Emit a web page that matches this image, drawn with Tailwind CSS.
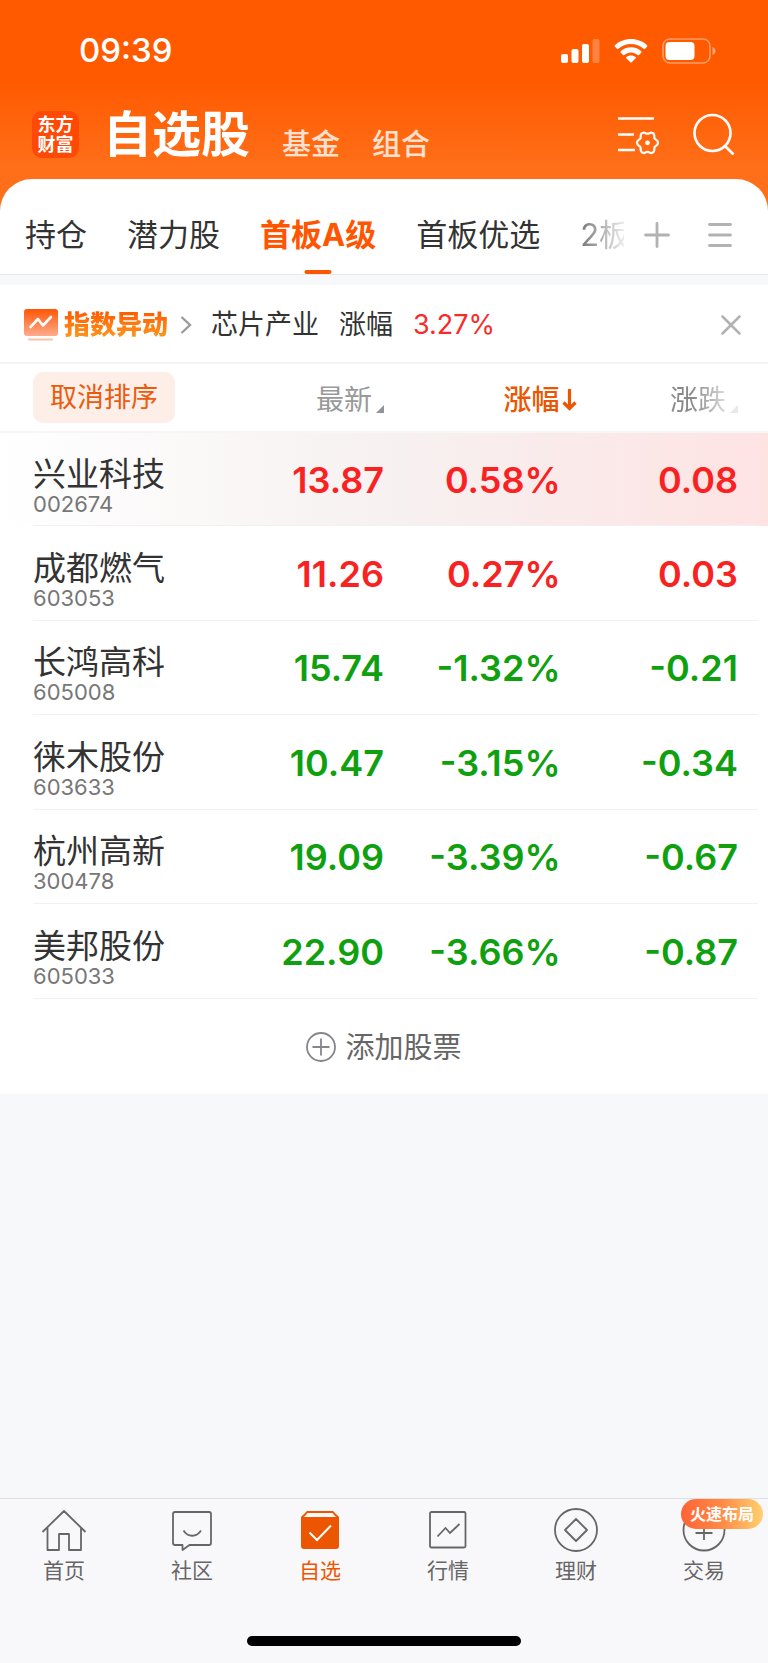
<!DOCTYPE html>
<html lang="zh-CN">
<head>
    <meta charset="UTF-8">
    <meta name="viewport" content="width=device-width, initial-scale=1.0">
    <title>自选股</title>
    <script src="https://cdn.jsdelivr.net/npm/@tailwindcss/browser@4"></script>
</head>
<body class="min-h-screen flex flex-col bg-[#f7f8fa] text-[#333] font-['Inter','Noto_Sans_CJK_SC',sans-serif]">
    <div class="bg-[linear-gradient(#ff5a00_80px,#ff6e18_165px)]">
        <!-- Status bar -->
        <div class="h-[102px] pl-[79px] pr-[52px] flex items-center justify-between text-white">
            <span class="text-[33px] font-medium">09:39</span>
            <div class="flex items-center gap-[14px]">
                <svg class="w-[39px] h-[26px]" viewBox="0 0 39 26" fill="currentColor">
                    <rect x="0" y="16" width="7" height="9" rx="2"/>
                    <rect x="10.500" y="11" width="7" height="14" rx="2"/>
                    <rect x="21" y="6" width="7" height="19" rx="2"/>
                    <rect x="31.500" y="1" width="7" height="24" rx="2" opacity=".25"/>
                </svg>
                <svg class="w-[34px] h-[26px]" viewBox="0 0 34 26" fill="currentColor">
                    <path d="M17 1C10.700 1 5 3.300 1 7.200c-.5.500-.5 1 0 1.500l2 2c.4.400.9.400 1.400 0C7.800 7.700 12.200 6 17 6s9.200 1.700 12.600 4.700c.5.400 1 .4 1.400 0l2-2c.5-.5.5-1 0-1.500C29 3.300 23.300 1 17 1z"/>
                    <path d="M17 9.300c-4 0-7.600 1.500-10.200 4-.5.400-.5 1 0 1.400l2.200 2.200c.4.400.9.400 1.400 0 1.800-1.500 4.100-2.500 6.600-2.500s4.800 1 6.600 2.500c.5.400 1 .4 1.400 0l2.200-2.200c.5-.4.500-1 0-1.400-2.600-2.500-6.200-4-10.200-4z"/>
                    <path d="M17 17.500c-1.900 0-3.500.6-4.700 1.600-.4.400-.4.800 0 1.200l4 4c.5.500.9.500 1.400 0l4-4c.4-.4.400-.8 0-1.200-1.200-1-2.800-1.600-4.700-1.600z"/>
                </svg>
                <svg class="w-[54px] h-[26px]" viewBox="0 0 54 26">
                    <rect x="1" y="1" width="47" height="24" rx="7" fill="none" stroke="#fff" stroke-opacity=".4" stroke-width="1.600"/>
                    <rect x="3.500" y="4" width="29" height="18" rx="4" fill="#fff"/>
                    <path d="M50.500 9c4 1.500 4 6.500 0 8z" fill="#fff" fill-opacity=".45"/>
                </svg>
            </div>
        </div>

        <!-- Title bar -->
        <header class="h-[64px] mb-[13px] pl-8 pr-[33px] flex items-center justify-between text-white">
            <div class="flex items-center">
                <div class="w-[47px] h-[47px] mr-6 pt-[2px] rounded-[10px] bg-[#ff4906] flex items-center justify-center text-center text-[18px] leading-5 font-bold">东方<br>财富</div>
                <div class="pt-[2px] flex items-end gap-8">
                    <h1 class="text-[49px] leading-[62px] font-bold">自选股</h1>
                    <a href="#" class="text-[29px] leading-[42px] font-medium text-white/80">基金</a>
                    <a href="#" class="text-[29px] leading-[42px] font-medium text-white/80">组合</a>
                </div>
            </div>
            <div class="flex items-center gap-[33px]">
                <button aria-label="设置">
                    <svg class="block w-[43px] h-[42px]" viewBox="0 0 43 42" fill="none" stroke="currentColor" stroke-width="2.600">
                        <path d="M1 5.500h36M1 21.500h16M1 37h17"/>
                        <path stroke-width="2.200" stroke-linejoin="round" d="M27 19.500c1 0 1.500 1.200 3.500 1.200s2.500-1.200 3.500-1.200c1.500.2 3 1.200 3.200 2.500.3 1.200-.2 2 .4 3.500.9 1.400 3.400 1.500 3.400 4.300s-2.500 2.900-3.400 4.300c-.6 1.500-.1 2.300-.4 3.500-.2 1.300-1.700 2.300-3.200 2.500-1 0-1.500-1.200-3.500-1.200s-2.500 1.200-3.500 1.200c-1.500-.2-3-1.200-3.200-2.500-.3-1.200.2-2-.4-3.500-.9-1.400-3.400-1.500-3.400-4.300s2.500-2.900 3.400-4.300c.6-1.500.1-2.300.4-3.500.2-1.300 1.700-2.300 3.200-2.500z"/>
                        <circle cx="30.500" cy="29.800" r="2.400" fill="currentColor" stroke="none"/>
                    </svg>
                </button>
                <button aria-label="搜索">
                    <svg class="block w-[42px] h-[42px]" viewBox="0 0 42 42" fill="none" stroke="currentColor" stroke-width="2.600">
                        <circle cx="19.500" cy="20" r="18"/>
                        <path d="M32 33l8.500 8.500"/>
                    </svg>
                </button>
            </div>
        </header>

        <!-- Group tabs -->
        <nav class="h-[96px] pl-[25px] pr-9 rounded-t-[32px] bg-white border-b border-[#e8e9eb] flex items-center justify-between text-[31px]">
            <div class="h-full pt-[18px] flex items-center gap-10 whitespace-nowrap overflow-hidden">
                <a href="#">持仓</a>
                <a href="#">潜力股</a>
                <a href="#" class="relative h-full flex items-center font-bold text-[#ff5500] after:absolute after:bottom-0 after:left-1/2 after:-translate-x-1/2 after:w-[27px] after:h-1 after:rounded-sm after:bg-[#ff5500]">首板A级</a>
                <a href="#">首板优选</a>
                <a href="#" class="w-11 overflow-hidden bg-linear-to-r from-[#777] to-[#eee] bg-clip-text text-transparent">2板</a>
            </div>
            <div class="pt-4 flex items-center gap-[38px] text-[#b2b2b2]">
                <button aria-label="添加分组">
                    <svg class="block w-[26px] h-[26px]" viewBox="0 0 26 26" stroke="currentColor" stroke-width="2.800" stroke-linecap="round"><path d="M13 1.500v23M1.500 13h23"/></svg>
                </button>
                <button aria-label="管理分组">
                    <svg class="block w-6 h-[26px]" viewBox="0 0 24 26" stroke="currentColor" stroke-width="2.800" stroke-linecap="round"><path d="M1.500 2.500h21M1.500 13h21M1.500 23.500h21"/></svg>
                </button>
            </div>
        </nav>
    </div>

    <main class="mt-[10px] bg-white">
        <!-- Index alert -->
        <div class="h-[79px] pt-[2px] pl-6 pr-[27px] border-b-2 border-[#f4f4f5] flex items-center text-[27px]">
            <svg class="w-[34px] h-8 mr-[6px]" viewBox="0 0 34 32">
                <defs>
                    <linearGradient id="chart" x1="0" y1="0" x2="0" y2="1">
                        <stop offset="0" stop-color="#ff5606"/>
                        <stop offset="1" stop-color="#ffac8c"/>
                    </linearGradient>
                </defs>
                <rect width="34" height="27" rx="3" fill="url(#chart)"/>
                <path d="M6.500 18L14 10l5 6.500L27 8" fill="none" stroke="#fff" stroke-width="2.600" stroke-linecap="round" stroke-linejoin="round"/>
                <rect x="4" y="29.500" width="25" height="2" rx="1" fill="#ffbfa6"/>
            </svg>
            <span class="text-[26px] leading-8 font-black bg-linear-to-b from-[#ff5200] to-[#ff9d1c] bg-clip-text text-transparent">指数异动</span>
            <svg class="w-3 h-5 ml-3 mr-[19px]" viewBox="0 0 12 20" fill="none" stroke="#999" stroke-width="2.300"><path d="M1.500 2l8.500 8-8.500 8"/></svg>
            <span class="pt-[2px]">芯片产业</span>
            <span class="ml-5 pt-[2px]">涨幅</span>
            <span class="ml-5 pt-[2px] text-[#f92a2a]">3.27%</span>
            <button class="ml-auto" aria-label="关闭">
                <svg class="block w-5 h-5" viewBox="0 0 20 20" stroke="#b2b2b2" stroke-width="2.500" stroke-linecap="round"><path d="M1.500 1.500l17 17M18.500 1.500l-17 17"/></svg>
            </button>
        </div>

        <!-- Stock table -->
        <table class="w-full table-fixed text-right">
            <thead>
                <tr class="h-[68px] border-b-2 border-[#f6f6f7] text-[28px] text-[#999]">
                    <th class="w-[28%] pl-[33px] text-left font-normal">
                        <button class="h-[51px] w-[142px] pt-[2px] rounded-[10px] bg-[#fdeee8] text-[27px] text-[#ec5a0c] whitespace-nowrap">取消排序</button>
                    </th>
                    <th class="w-[22%] pt-1 font-normal">
                        <button class="inline-flex items-end gap-1">最新<svg class="w-2 h-2 mb-2" viewBox="0 0 8 8" fill="#909399"><path d="M8 0v8H0z"/></svg></button>
                    </th>
                    <th class="w-[23%] pt-1 font-normal">
                        <button class="-mr-4 inline-flex items-center gap-[2px] font-medium text-[#ec5600]">涨幅<svg class="w-[15px] h-[22px]" viewBox="0 0 15 22" fill="none" stroke="currentColor" stroke-width="3.200"><path d="M7.500 0v20M1.500 13.500l6 6 6-6"/></svg></button>
                    </th>
                    <th class="w-[27%] pt-1 pr-[30px] font-normal">
                        <button class="inline-flex items-end gap-1"><span class="bg-linear-to-r from-[#888] from-40% to-[#ddd] bg-clip-text text-transparent">涨跌</span><svg class="w-2 h-2 mb-2" viewBox="0 0 8 8" fill="#e8e8ea"><path d="M8 0v8H0z"/></svg></button>
                    </th>
                </tr>
            </thead>
            <tbody id="stockList">
                <!-- Rows are inserted by displayStocks -->
            </tbody>
        </table>

        <button class="w-full h-[95px] flex items-center justify-center gap-[9px] text-[29px] text-[#666]">
            <svg class="w-[30px] h-[30px]" viewBox="0 0 30 30" fill="none" stroke="#85858c" stroke-width="1.800"><circle cx="15" cy="15" r="14"/><path d="M15 6.500v17M6.500 15h17"/></svg>
            <span class="pt-[2px]">添加股票</span>
        </button>
    </main>

    <!-- Bottom navigation -->
    <footer class="mt-auto h-[165px] border-t border-[#dddfe3] bg-[#f8f8fb] flex flex-col">
        <nav class="grid grid-cols-6 pt-2 text-[21px] leading-9 text-[#666]">
            <a href="#" class="flex flex-col items-center">
                <svg class="w-[46px] h-[46px]" viewBox="0 0 46 46" fill="none" stroke="currentColor" stroke-width="1.800"><path d="M1.500 25L23 4l21.500 21M6.500 20.500V43h11.500V27h10v16h12V20.500" stroke-linejoin="round"/></svg>
                首页
            </a>
            <a href="#" class="flex flex-col items-center">
                <svg class="w-[46px] h-[46px]" viewBox="0 0 46 46" fill="none" stroke="currentColor" stroke-width="1.800"><path d="M6 5h34q2 0 2 2v29q0 2-2 2H20.500l-7 5v-5H6q-2 0-2-2V7q0-2 2-2z" stroke-linejoin="round"/><path d="M14.500 23.500c4.500 7 13 7 17.500 0"/></svg>
                社区
            </a>
            <a href="#" class="flex flex-col items-center text-[#ec5600]">
                <svg class="w-[46px] h-[46px]" viewBox="0 0 46 46"><path d="M10 4h26l6 6v29q0 3-3 3H7q-3 0-3-3V10z" fill="#ec5600"/><path d="M10.500 6h25l3.500 4H7z" fill="#f8f8fb"/><path d="M12.500 25.500l7.500 7.500 14-14.500" fill="none" stroke="#fff" stroke-width="2"/></svg>
                自选
            </a>
            <a href="#" class="flex flex-col items-center">
                <svg class="w-[46px] h-[46px]" viewBox="0 0 46 46" fill="none" stroke="currentColor" stroke-width="1.800"><rect x="5" y="5" width="35.500" height="35.500" rx="1.500"/><path d="M12.500 29.500l8-8.500 4.500 5L34.500 17"/></svg>
                行情
            </a>
            <a href="#" class="flex flex-col items-center">
                <svg class="w-[46px] h-[46px]" viewBox="0 0 46 46" fill="none" stroke="currentColor" stroke-width="1.800"><circle cx="23" cy="23" r="21"/><path d="M23 12l11 11-11 11-11-11z" stroke-linejoin="round"/></svg>
                理财
            </a>
            <a href="#" class="relative flex flex-col items-center">
                <svg class="w-[46px] h-[46px]" viewBox="0 0 46 46" fill="none" stroke="currentColor" stroke-width="1.800"><circle cx="23" cy="23" r="20.500"/><path d="M23 14v19M14.500 26h17"/></svg>
                交易
                <span class="absolute -top-2 right-[5px] w-[82px] h-[30px] rounded-full bg-linear-to-r from-[#ff6236] via-[#ff8a45] to-[#ffd070] text-center text-[16px] leading-[30px] font-bold text-white">火速布局</span>
            </a>
        </nav>
        <div class="mt-auto mb-[17px] mx-auto w-[274px] h-[10px] rounded-full bg-black"></div>
    </footer>

    <script>
        const stockList = document.getElementById('stockList');

        const stocks = [
            { name: '兴业科技', code: '002674', price: '13.87', percent: '0.58%', change: '0.08', active: true },
            { name: '成都燃气', code: '603053', price: '11.26', percent: '0.27%', change: '0.03' },
            { name: '长鸿高科', code: '605008', price: '15.74', percent: '-1.32%', change: '-0.21' },
            { name: '徕木股份', code: '603633', price: '10.47', percent: '-3.15%', change: '-0.34' },
            { name: '杭州高新', code: '300478', price: '19.09', percent: '-3.39%', change: '-0.67' },
            { name: '美邦股份', code: '605033', price: '22.90', percent: '-3.66%', change: '-0.87' }
        ];

        // Red for rising, green for falling
        function displayStocks(stocks) {
            stockList.innerHTML = stocks.map(stock => `
                <tr class="relative odd:h-[94px] even:h-[95px] text-[36px] font-semibold after:absolute after:left-[33px] after:right-[10px] after:bottom-0 after:h-px after:bg-[#f1f1f2] ${stock.active ? 'bg-linear-to-r from-white via-[#f7f1f1] to-[#fee3e3]' : ''} ${stock.change.startsWith('-') ? 'text-[#0fa00f]' : 'text-[#f92222]'}">
                    <td class="pl-[33px] pt-3 text-left font-normal whitespace-nowrap">
                        <div class="text-[33px] leading-9 text-[#333]">${stock.name}</div>
                        <div class="text-[22px] leading-6 text-[#777]">${stock.code}</div>
                    </td>
                    <td>${stock.price}</td>
                    <td>${stock.percent}</td>
                    <td class="pr-[30px]">${stock.change}</td>
                </tr>
            `).join('');
        }

        displayStocks(stocks);
    </script>
</body>
</html>
